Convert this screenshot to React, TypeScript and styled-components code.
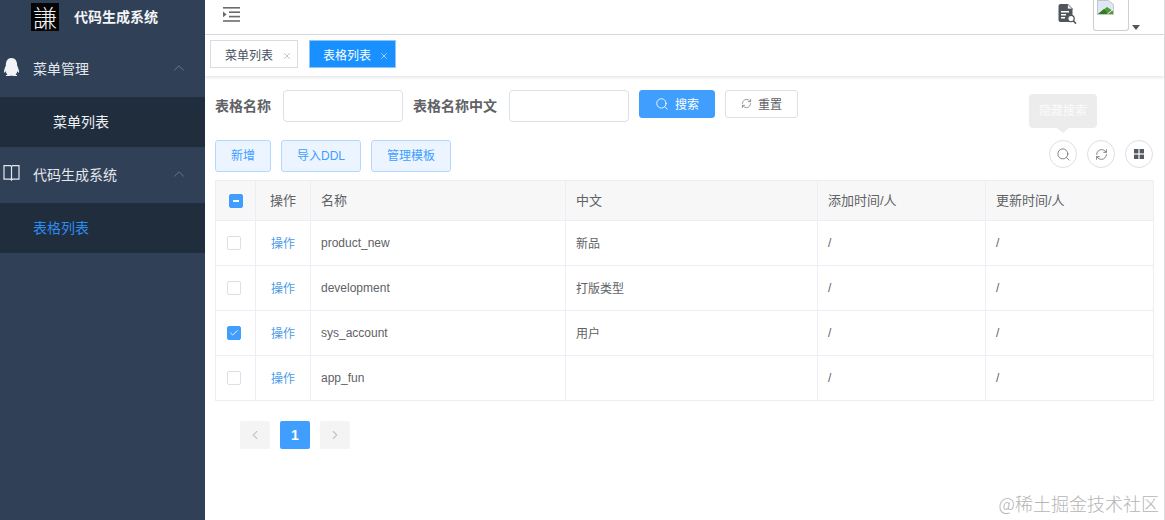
import styled, { createGlobalStyle } from "styled-components";
import { FaQq } from "react-icons/fa";
import { Search, RefreshCw, ChevronUp, ChevronLeft, ChevronRight, X, Check } from "lucide-react";

const GlobalStyle = createGlobalStyle`
  html, body {
    margin: 0;
    padding: 0;
    height: 100%;
    background: #fff;
    font-family: "Liberation Sans", "Noto Sans CJK SC", sans-serif;
    overflow: hidden;
  }
  * { box-sizing: border-box; }
`;

const rows = [
  { name: "product_new", cn: "新品", checked: false },
  { name: "development", cn: "打版类型", checked: false },
  { name: "sys_account", cn: "用户", checked: true },
  { name: "app_fun", cn: "", checked: false },
];

export default function App() {
  return (
    <Page>
      <GlobalStyle />
      <Sidebar>
        <Brand>
          <Logo>謙</Logo>
          <BrandName>代码生成系统</BrandName>
        </Brand>
        <MenuGroup $height={55}>
          <MenuIcon>
            <FaQq size={18} />
          </MenuIcon>
          <MenuTitle>菜单管理</MenuTitle>
          <ChevronUp size={18} strokeWidth={1} color="#7b8796" />
        </MenuGroup>
        <SubItem $indent={53} $height={50}>菜单列表</SubItem>
        <MenuGroup $height={56}>
          <MenuIcon>
            <svg width="17" height="16" viewBox="0 0 17 16" fill="none" stroke="#e4e8ee" strokeWidth="1.2">
              <path d="M1 .7h6.5l1 1 1-1H16v13.4H9.5l-1 1-1-1H1z" />
              <path d="M8.5 1.7v13.4" />
            </svg>
          </MenuIcon>
          <MenuTitle>代码生成系统</MenuTitle>
          <ChevronUp size={18} strokeWidth={1} color="#7b8796" />
        </MenuGroup>
        <SubItem $indent={33} $height={50} $active>表格列表</SubItem>
      </Sidebar>
      <Main>
        <TopBar>
          <Collapse>
            <svg width="17" height="15" viewBox="0 0 17 15" fill="#6b6b6b">
              <rect x="0" y="0" width="17" height="1.6" />
              <rect x="6" y="4.4" width="11" height="1.6" />
              <rect x="6" y="8.8" width="11" height="1.6" />
              <rect x="0" y="13.2" width="17" height="1.6" />
              <path d="M0 4.6l3.6 2.8L0 10.2z" />
            </svg>
          </Collapse>
          <TopRight>
            <svg width="19" height="22" viewBox="0 0 19 22">
              <path d="M2.5 1h7l5 5v13h-12a2 2 0 0 1-2-2V3a2 2 0 0 1 2-2z" fill="#50555b" />
              <path d="M9.5 1v5h5z" fill="#fff" stroke="#50555b" strokeWidth="0.8" />
              <rect x="3" y="8" width="8" height="1.5" fill="#fff" />
              <rect x="3" y="11" width="5" height="1.5" fill="#fff" />
              <rect x="3" y="14" width="4" height="1.5" fill="#fff" />
              <circle cx="13" cy="15.5" r="3.2" fill="#fff" stroke="#50555b" strokeWidth="1.3" />
              <path d="M15.4 18l2.6 2.6" stroke="#50555b" strokeWidth="1.5" />
            </svg>
            <Avatar>
              <svg width="17" height="15" viewBox="0 0 17 15">
                <path d="M0.5 0.5h11l5 4v10h-16z" fill="#dfe6f5" stroke="#b9b9b9" strokeWidth="0.8" />
                <path d="M1 14l9-7 6 4v3z" fill="#4f9a35" />
                <path d="M1 14l6-5 4 5z" fill="#2f7d1e" />
                <path d="M10 14l6-5v1l-5 4z" fill="#fff" />
              </svg>
            </Avatar>
            <Caret />
          </TopRight>
        </TopBar>
        <TabBar>
          <Tab>
            菜单列表
            <X size={10} strokeWidth={1.4} color="#9a9a9a" />
          </Tab>
          <Tab $active>
            表格列表
            <X size={10} strokeWidth={1.4} color="#fff" />
          </Tab>
        </TabBar>
        <Content>
          <SearchRow>
            <FieldLabel>表格名称</FieldLabel>
            <Input />
            <FieldLabel>表格名称中文</FieldLabel>
            <Input />
            <SearchButton>
              <Search size={14} strokeWidth={1.5} />
              搜索
            </SearchButton>
            <ResetButton>
              <RefreshCw size={11} strokeWidth={1.6} color="#777" />
              重置
            </ResetButton>
          </SearchRow>
          <ActionRow>
            <PlainButton $width={56}>新增</PlainButton>
            <PlainButton $width={80}>导入DDL</PlainButton>
            <PlainButton $width={80}>管理模板</PlainButton>
            <ToolGroup>
              <Tooltip>隐藏搜索</Tooltip>
              <CircleButton>
                <Search size={15} strokeWidth={1.2} />
              </CircleButton>
              <CircleButton>
                <RefreshCw size={13} strokeWidth={1.4} />
              </CircleButton>
              <CircleButton>
                <GridIcon viewBox="0 0 10 10">
                  <rect x="0" y="0" width="4.4" height="4.4" />
                  <rect x="5.6" y="0" width="4.4" height="4.4" />
                  <rect x="0" y="5.6" width="4.4" height="4.4" />
                  <rect x="5.6" y="5.6" width="4.4" height="4.4" />
                </GridIcon>
              </CircleButton>
            </ToolGroup>
          </ActionRow>
          <Table>
            <colgroup>
              <col width={40} />
              <col width={55} />
              <col width={255} />
              <col width={252} />
              <col width={168} />
              <col width={168} />
            </colgroup>
            <thead>
              <tr>
                <HeadCell $center $latin>
                  <CheckBox $on>
                    <Dash />
                  </CheckBox>
                </HeadCell>
                <HeadCell $center>操作</HeadCell>
                <HeadCell>名称</HeadCell>
                <HeadCell>中文</HeadCell>
                <HeadCell>添加时间/人</HeadCell>
                <HeadCell>更新时间/人</HeadCell>
              </tr>
            </thead>
            <tbody>
              {rows.map((row) => (
                <tr key={row.name}>
                  <BodyCell $center $latin>
                    <RowCheck $on={row.checked}>
                      {row.checked && <Check size={10} strokeWidth={2} color="#fff" />}
                    </RowCheck>
                  </BodyCell>
                  <BodyCell $center>
                    <OpLink>操作</OpLink>
                  </BodyCell>
                  <BodyCell $latin>{row.name}</BodyCell>
                  <BodyCell>{row.cn}</BodyCell>
                  <BodyCell $latin>/</BodyCell>
                  <BodyCell $latin>/</BodyCell>
                </tr>
              ))}
            </tbody>
          </Table>
          <Pager>
            <PageButton>
              <ChevronLeft size={14} strokeWidth={2} />
            </PageButton>
            <PageButton $active>1</PageButton>
            <PageButton>
              <ChevronRight size={14} strokeWidth={2} />
            </PageButton>
          </Pager>
        </Content>
      </Main>
      <Watermark>@稀土掘金技术社区</Watermark>
    </Page>
  );
}

const Page = styled.div`
  position: relative;
  display: flex;
  width: 1165px;
  height: 520px;
  overflow: hidden;
`;

const Sidebar = styled.aside`
  width: 205px;
  flex: none;
  background: #304057;
  color: #eef1f5;
`;

const Brand = styled.div`
  display: flex;
  align-items: flex-start;
  height: 42px;
  padding: 3px 0 0 31px;
`;

const Logo = styled.div`
  width: 28px;
  height: 28px;
  background: #050505;
  color: #f2f2f2;
  font-family: "Noto Sans CJK TC", serif;
  font-size: 24px;
  font-weight: 300;
  line-height: 28px;
  text-align: center;
`;

const BrandName = styled.div`
  margin: 4px 0 0 15px;
  font-size: 14px;
  font-weight: 700;
  line-height: 20px;
  color: #f3f5f8;
`;

const MenuGroup = styled.div<{ $height: number }>`
  display: flex;
  align-items: center;
  height: ${(p) => p.$height}px;
  padding: 0 17px 3px 3px;
  font-size: 14px;
`;

const MenuIcon = styled.span`
  display: flex;
  width: 17px;
  justify-content: center;
  margin-bottom: 2px;
  color: #f2f4f7;
`;

const MenuTitle = styled.span`
  flex: 1;
  margin-left: 13px;
  color: #e4e8ee;
`;

const SubItem = styled.div<{ $indent: number; $height: number; $active?: boolean }>`
  display: flex;
  align-items: center;
  height: ${(p) => p.$height}px;
  padding: 0 0 2px ${(p) => p.$indent}px;
  background: #1f2d3d;
  font-size: 14px;
  color: ${(p) => (p.$active ? "#2d8cf0" : "#eef1f5")};
`;

const Main = styled.main`
  flex: 1;
  min-width: 0;
  border-right: 1px solid #ddd;
  color: #606266;
`;

const TopBar = styled.header`
  display: flex;
  align-items: flex-start;
  justify-content: space-between;
  height: 35px;
  border-bottom: 1px solid #d8d8d8;
`;

const Collapse = styled.div`
  display: flex;
  padding: 7px 0 0 18px;
`;

const TopRight = styled.div`
  display: flex;
  align-items: flex-start;
  padding: 3px 24px 0 0;
`;

const Avatar = styled.div`
  width: 36px;
  height: 31px;
  margin: -3px 0 0 16px;
  padding: 0 0 0 3px;
  border: 1px solid #cfcfcf;
  border-top: 0;
  border-radius: 0 0 3px 3px;
`;

const Caret = styled.div`
  width: 0;
  height: 0;
  margin: 22px 0 0 3px;
  border-left: 4.5px solid transparent;
  border-right: 4.5px solid transparent;
  border-top: 5px solid #555;
`;

const TabBar = styled.nav`
  display: flex;
  gap: 11px;
  height: 41px;
  padding: 5px 0 0 5px;
  box-shadow: 0 2px 3px rgba(0, 0, 0, 0.09);
`;

const Tab = styled.div<{ $active?: boolean }>`
  display: flex;
  align-items: center;
  justify-content: space-between;
  width: ${(p) => (p.$active ? 87 : 88)}px;
  height: 28px;
  padding: 0 ${(p) => (p.$active ? 6 : 5)}px 0 ${(p) => (p.$active ? 13 : 14)}px;
  border: 1px solid ${(p) => (p.$active ? "#90c5f5" : "#d8dce5")};
  background: ${(p) => (p.$active ? "#1890ff" : "#fff")};
  color: ${(p) => (p.$active ? "#fff" : "#495060")};
  font-size: 12px;

  svg {
    margin-top: 3px;
  }
`;

const Content = styled.div`
  padding: 14px 11px 0 10px;
`;

const SearchRow = styled.div`
  display: flex;
  align-items: flex-start;
  height: 50px;
`;

const FieldLabel = styled.label`
  margin-right: 12px;
  font-size: 14px;
  font-weight: 700;
  line-height: 32px;
  color: #606266;
`;

const Input = styled.div`
  width: 120px;
  height: 32px;
  margin-right: 10px;
  border: 1px solid #dcdfe6;
  border-radius: 4px;
`;

const SearchButton = styled.button`
  display: flex;
  align-items: center;
  justify-content: center;
  gap: 6px;
  width: 76px;
  height: 28px;
  padding: 0 0 1px;
  border: 1px solid #409eff;
  border-radius: 3px;
  background: #409eff;
  color: #fff;
  font: inherit;
  font-size: 12px;
`;

const ResetButton = styled.button`
  display: flex;
  align-items: center;
  justify-content: center;
  gap: 6px;
  width: 73px;
  height: 28px;
  margin-left: 10px;
  padding: 0 0 1px;
  border: 1px solid #dcdfe6;
  border-radius: 3px;
  background: #fff;
  color: #606266;
  font: inherit;
  font-size: 12px;
`;

const ActionRow = styled.div`
  display: flex;
  align-items: flex-start;
  gap: 10px;
  height: 40px;
`;

const PlainButton = styled.button<{ $width: number }>`
  width: ${(p) => p.$width}px;
  height: 32px;
  padding: 0 0 3px;
  border: 1px solid #b3d8ff;
  border-radius: 3px;
  background: #ecf5ff;
  color: #409eff;
  font: inherit;
  font-size: 12px;
`;

const ToolGroup = styled.div`
  position: relative;
  display: flex;
  gap: 10px;
  margin-left: auto;
`;

const Tooltip = styled.div`
  position: absolute;
  left: -20px;
  top: -46px;
  width: 68px;
  height: 34px;
  border-radius: 4px;
  background: #ececec;
  color: #fbfbfb;
  font-size: 12px;
  line-height: 34px;
  text-align: center;

  &::after {
    content: "";
    position: absolute;
    left: 28px;
    bottom: -5px;
    border-left: 6px solid transparent;
    border-right: 6px solid transparent;
    border-top: 5px solid #ececec;
  }
`;

const CircleButton = styled.button`
  display: flex;
  align-items: center;
  justify-content: center;
  width: 28px;
  height: 28px;
  padding: 0;
  border: 1px solid #dcdfe6;
  border-radius: 50%;
  background: #fff;
  color: #606266;
`;

const GridIcon = styled.svg`
  width: 10px;
  height: 10px;
  fill: #555a62;
`;

const Table = styled.table`
  width: 937px;
  border-collapse: collapse;
  table-layout: fixed;
  font-size: 12px;
`;

const HeadCell = styled.th<{ $center?: boolean; $latin?: boolean }>`
  height: 40px;
  padding: 0 ${(p) => (p.$center ? 0 : 10)}px ${(p) => (p.$latin ? 0 : 2)}px;
  border: 1px solid #ebeef5;
  background: #f7f7f7;
  color: #606266;
  font-size: 13px;
  font-weight: 400;
  text-align: ${(p) => (p.$center ? "center" : "left")};
  vertical-align: middle;
`;

const BodyCell = styled.td<{ $center?: boolean; $latin?: boolean }>`
  height: 45px;
  padding: 0 ${(p) => (p.$center ? 0 : 10)}px ${(p) => (p.$latin ? 0 : 2)}px;
  border: 1px solid #ebeef5;
  color: #606266;
  text-align: ${(p) => (p.$center ? "center" : "left")};
  vertical-align: middle;
`;

const CheckBox = styled.span<{ $on?: boolean }>`
  display: inline-flex;
  align-items: center;
  justify-content: center;
  width: 14px;
  height: 14px;
  border: 1px solid ${(p) => (p.$on ? "#409eff" : "#dcdfe6")};
  border-radius: 2px;
  background: ${(p) => (p.$on ? "#409eff" : "#fff")};
  vertical-align: middle;
`;

const RowCheck = styled(CheckBox)`
  margin-right: 4px;
`;

const Dash = styled.span`
  width: 6px;
  height: 2px;
  background: #fff;
`;

const OpLink = styled.span`
  color: #4a9be8;
`;

const Pager = styled.div`
  display: flex;
  gap: 10px;
  padding: 20px 0 0 25px;
`;

const PageButton = styled.div<{ $active?: boolean }>`
  display: flex;
  align-items: center;
  justify-content: center;
  width: 30px;
  height: 28px;
  border-radius: 2px;
  background: ${(p) => (p.$active ? "#409eff" : "#f4f4f5")};
  color: ${(p) => (p.$active ? "#fff" : "#c0c4cc")};
  font-size: 14px;
  font-weight: 700;
`;

const Watermark = styled.div`
  position: absolute;
  right: 6px;
  bottom: 5px;
  color: #b5b5b5;
  font-family: "Noto Sans CJK SC", sans-serif;
  font-size: 18px;
  line-height: 24px;
  font-weight: 300;
`;
